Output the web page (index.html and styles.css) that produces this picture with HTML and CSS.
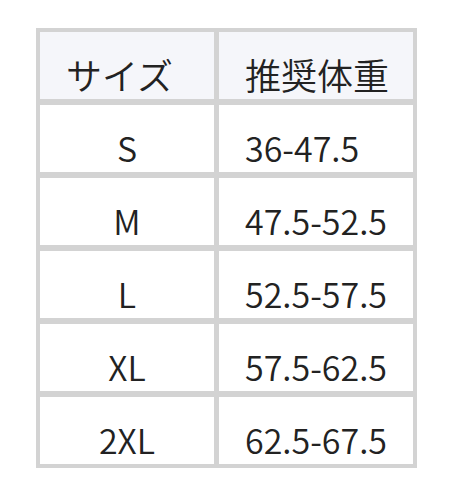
FILE: index.html
```html
<!DOCTYPE html>
<html lang="ja">
<head>
<meta charset="utf-8">
<link rel="stylesheet" href="styles.css">
</head>
<body>
<table class="size-table">
  <thead>
    <tr>
      <th class="col-size">サイズ</th>
      <th class="col-weight">推奨体重</th>
    </tr>
  </thead>
  <tbody>
    <tr><td class="size">S</td><td class="weight">36-47.5</td></tr>
    <tr><td class="size">M</td><td class="weight">47.5-52.5</td></tr>
    <tr><td class="size">L</td><td class="weight">52.5-57.5</td></tr>
    <tr><td class="size">XL</td><td class="weight">57.5-62.5</td></tr>
    <tr><td class="size">2XL</td><td class="weight">62.5-67.5</td></tr>
  </tbody>
</table>
</body>
</html>
```
FILE: styles.css
```css
html, body {
  margin: 0;
  padding: 0;
  background: #ffffff;
}
body {
  padding: 28px 0 0 36px;
  font-family: "Noto Sans CJK JP", "Noto Sans", sans-serif;
  color: #222222;
}
.size-table {
  border-collapse: separate;
  border-spacing: 0;
  border: 4px solid #d3d3d3;
  width: 381px;
  table-layout: fixed;
}
.size-table th,
.size-table td {
  height: 67px;
  padding: 0;
  font-weight: 350;
  line-height: 49px;
  vertical-align: bottom;
  box-sizing: content-box;
  border-bottom: 6px solid #d3d3d3;
}
.size-table th {
  font-size: 36px;
  background: #f5f6fa;
  text-align: left;
}
.size-table td {
  font-size: 34px;
}
.size-table tbody tr:last-child td {
  border-bottom: 0;
}
.size-table .col-size,
.size-table .size {
  width: 174px;
  border-right: 5px solid #d3d3d3;
}
.size-table .col-size {
  width: 148px;
  padding-left: 26px;
}
.size-table .col-weight {
  padding-left: 26px;
}
.size-table .size {
  text-align: center;
}
.size-table .weight {
  text-align: left;
  padding-left: 26px;
}
```
